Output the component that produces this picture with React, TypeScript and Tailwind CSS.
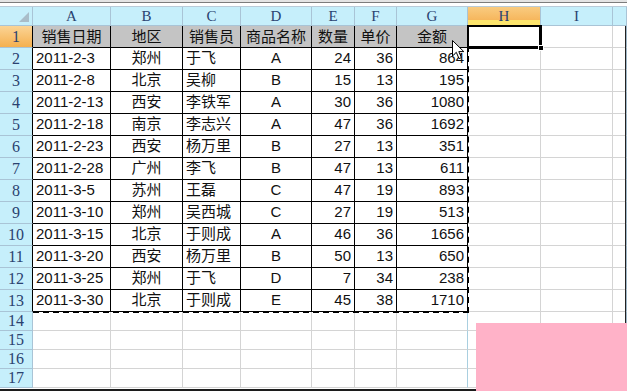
import React from "react";

const header = ["销售日期", "地区", "销售员", "商品名称", "数量", "单价", "金额"];

const rows: (string | number)[][] = [
  ["2011-2-3", "郑州", "于飞", "A", 24, 36, 864],
  ["2011-2-8", "北京", "吴柳", "B", 15, 13, 195],
  ["2011-2-13", "西安", "李铁军", "A", 30, 36, 1080],
  ["2011-2-18", "南京", "李志兴", "A", 47, 36, 1692],
  ["2011-2-23", "西安", "杨万里", "B", 27, 13, 351],
  ["2011-2-28", "广州", "李飞", "B", 47, 13, 611],
  ["2011-3-5", "苏州", "王磊", "C", 47, 19, 893],
  ["2011-3-10", "郑州", "吴西城", "C", 27, 19, 513],
  ["2011-3-15", "北京", "于则成", "A", 46, 36, 1656],
  ["2011-3-20", "西安", "杨万里", "B", 50, 13, 650],
  ["2011-3-25", "郑州", "于飞", "D", 7, 34, 238],
  ["2011-3-30", "北京", "于则成", "E", 45, 38, 1710],
];

const letters = ["A", "B", "C", "D", "E", "F", "G", "H", "I", ""];

const align = [
  "justify-start pl-[3px]",
  "justify-center",
  "justify-start pl-[3px]",
  "justify-center",
  "justify-end pr-[3px]",
  "justify-end pr-[3px]",
  "justify-end pr-[3px]",
];

const headBg = "bg-[#c6effb]";
const headText = "font-['Liberation_Serif','Noto_Sans_CJK_SC',serif] text-[#2a4270]";

function RowHead({ n, table }: { n: number; table: boolean }) {
  const active = n === 1;
  return (
    <div
      className={`flex items-center justify-center border-b border-r text-[16px] ${headText} ${
        table ? "border-r-black border-b-[#a9c4d6]" : "border-[#a9c4d6]"
      } ${active ? "bg-[linear-gradient(to_bottom,#fbd495,#f5b04f)]" : headBg}`}
    >
      {n}
    </div>
  );
}

function Blank({ col }: { col: number }) {
  return (
    <div
      className={`border-b border-r border-[#d4d4d4] ${col === 9 ? "border-r-[#9fb7c8]" : ""}`}
    />
  );
}

export default function App() {
  return (
    <div className="relative h-[391px] w-[627px] overflow-hidden bg-white font-['Liberation_Sans','Noto_Sans_CJK_SC',sans-serif] text-[15px] text-[#111]">
      <div className="h-[2px] bg-[#e4e4e4]" />
      <div className="h-px bg-[#7c7c7c]" />
      <div className="h-[3px] bg-white" />
      <div className="h-px bg-[#b9cbd8]" />

      <div className="grid grid-cols-[33px_78px_72px_58px_71px_43px_42px_71px_73px_72px_1fr] grid-rows-[19px_repeat(13,22px)_repeat(4,19px)]">
        {/* column headers */}
        <div className={`relative border-b border-r border-[#a9c4d6] ${headBg}`}>
          <svg className="absolute bottom-[3px] right-[3px]" width="10" height="10" viewBox="0 0 10 10">
            <polygon points="10,0 10,10 0,10" fill="#a9bdc9" />
          </svg>
        </div>
        {letters.map((l, i) => (
          <div
            key={i}
            className={`flex items-center justify-center border-b border-r border-[#a9c4d6] text-[15px] ${headText} ${
              l === "H"
                ? "bg-[linear-gradient(to_bottom,#f9cb80_0%,#f6b65c_74%,#fde56c_74%,#fde56c_100%)]"
                : headBg
            }`}
          >
            {l}
          </div>
        ))}

        {/* row 1 */}
        <RowHead n={1} table />
        {header.map((h, i) => (
          <div
            key={h}
            className="flex items-center justify-center border-b border-r border-black bg-[#c4c4c4] font-['Noto_Sans_CJK_SC',sans-serif] text-[15px]"
          >
            {h}
          </div>
        ))}
        <div className="border-b border-r border-[#d4d4d4]" />
        <Blank col={8} />
        <Blank col={9} />

        {/* data rows */}
        {rows.map((r, ri) => (
          <React.Fragment key={ri}>
            <RowHead n={ri + 2} table />
            {r.map((v, ci) => (
              <div
                key={ci}
                className={`flex items-center border-b border-r border-black ${align[ci]}`}
              >
                {v}
              </div>
            ))}
            <Blank col={7} />
            <Blank col={8} />
            <Blank col={9} />
          </React.Fragment>
        ))}

        {/* empty rows */}
        {[14, 15, 16, 17].map((n) => (
          <React.Fragment key={n}>
            <RowHead n={n} table={false} />
            {[0, 1, 2, 3, 4, 5, 6].map((c) => (
              <div
                key={c}
                className={`border-b border-r border-[#d4d4d4] ${c === 6 ? "border-r-[#a9cfe0]" : ""}`}
              />
            ))}
            <Blank col={7} />
            <Blank col={8} />
            <Blank col={9} />
          </React.Fragment>
        ))}
      </div>
      <div className="h-px bg-white" />
      <div className="h-[2px] bg-[#1c1c1c]" />

      {/* copy marquee around A1:G13 */}
      <div className="pointer-events-none absolute left-[33px] top-[26px] h-[287px] w-[436px] border-b-2 border-r-2 border-dashed border-black" />

      {/* active cell H1 */}
      <div className="pointer-events-none absolute left-[467px] top-[25px] h-[24px] w-[75px] border-2 border-b-[3px] border-r-[3px] border-black" />
      <div className="absolute left-[538px] top-[45px] h-[6px] w-[6px] border border-white bg-black" />

      {/* window edge */}
      <div className="absolute left-[625px] top-[26px] h-[365px] w-px bg-[#222]" />

      {/* mouse pointer */}
      <svg className="absolute left-[452px] top-[40px]" width="13" height="20" viewBox="0 0 13 20">
        <path
          d="M0.5 0.5 L0.5 16 L4.3 12.3 L7 18.6 L9.4 17.6 L6.8 11.6 L11.8 11.6 Z"
          fill="#fff"
          stroke="#000"
          strokeWidth="1"
          strokeLinejoin="miter"
        />
      </svg>

      {/* pink block */}
      <div className="absolute left-[476px] top-[323px] h-[68px] w-[151px] bg-[#ffb2c8]" />
    </div>
  );
}
